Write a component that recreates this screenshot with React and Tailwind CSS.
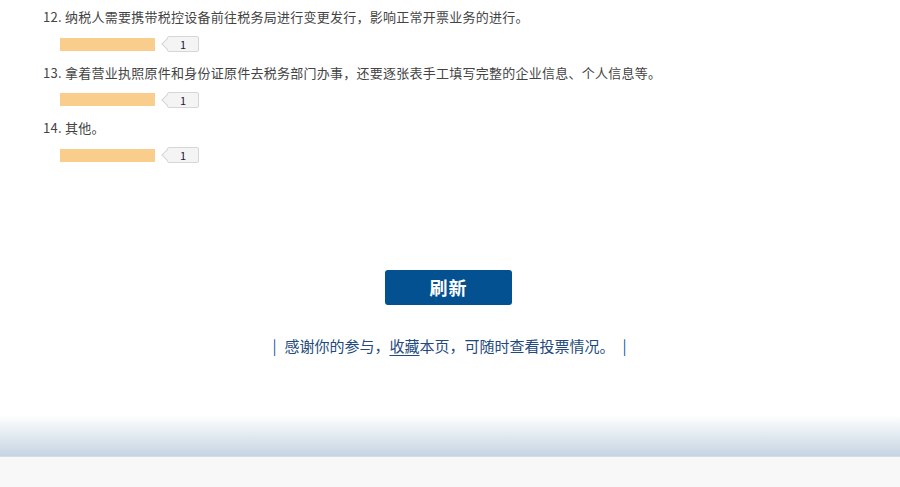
export default function App() {
  const items = [
    "12. 纳税人需要携带税控设备前往税务局进行变更发行，影响正常开票业务的进行。",
    "13. 拿着营业执照原件和身份证原件去税务部门办事，还要逐张表手工填写完整的企业信息、个人信息等。",
    "14. 其他。",
  ];
  const font = { fontFamily: '"Microsoft YaHei","Noto Sans CJK SC",sans-serif' };
  return (
    <div className="w-[900px] h-[487px] bg-white overflow-hidden flex flex-col" style={font}>
      <div className="pl-[43px] pt-[8px] flex flex-col">
        {items.map((t, i) => (
          <div key={i} className="h-[55.5px] flex flex-col">
            <div className="text-[13px] leading-[18px] text-[#444] tracking-[0.25px]">{t}</div>
            <div className="mt-[10px] ml-[17px] flex items-center h-[16px]">
              <div className="w-[95px] h-[13px] bg-[#f9cd8b]" />
              <div className="relative ml-[12px] w-[32px] h-[16px] border border-[#d6d6d6] rounded-[2px] bg-[#f4f4f4] text-[11px] leading-[14px] text-[#223] text-center">
                1
                <div className="absolute left-[-5px] top-[3px] w-[8px] h-[8px] rotate-45 bg-[#f4f4f4] border-l border-b border-[#d6d6d6]" />
              </div>
            </div>
          </div>
        ))}
      </div>
      <div className="flex justify-center mt-[95px] pr-[3px]">
        <button className="w-[127px] h-[35px] rounded-[3px] bg-[#045192] text-white text-[18px] font-bold tracking-[1px]">刷新</button>
      </div>
      <div className="flex justify-center items-center mt-[31px] text-[15px] text-[#234a7e] leading-[20px] pr-[1px]">
        <span className="text-[#1a5aa8] mr-[8px]">|</span>
        <span>感谢你的参与，<span className="underline underline-offset-[3px]">收藏</span>本页，可随时查看投票情况。</span>
        <span className="text-[#1a5aa8] ml-[8px]">|</span>
      </div>
      <div className="mt-[59px] h-[42px] bg-gradient-to-b from-white to-[#c6d5e2] border-b border-[#d3dde8]" />
      <div className="flex-1 bg-[#f8f8f8]" />
    </div>
  );
}
